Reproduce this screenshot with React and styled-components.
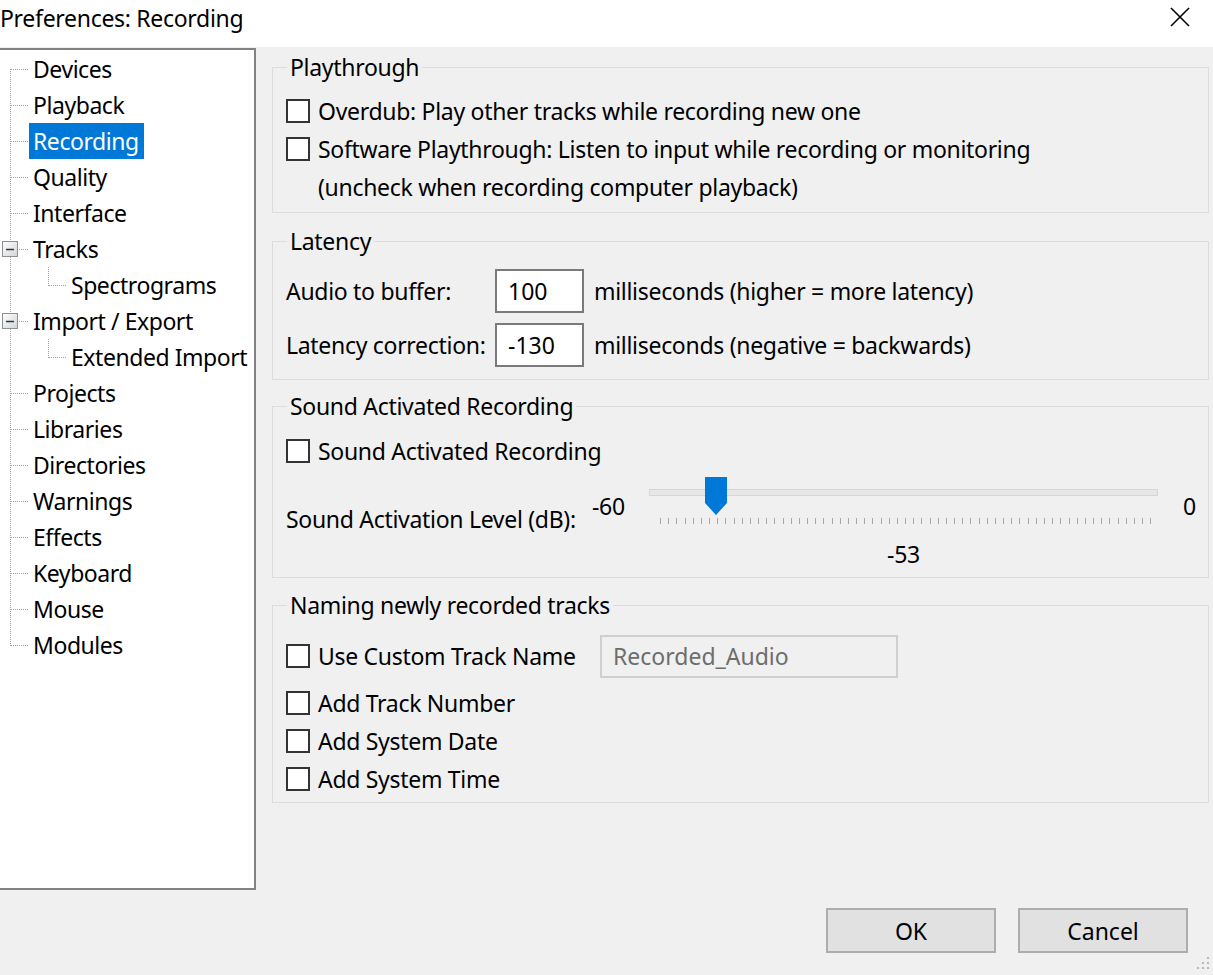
import React from "react";
import styled, { createGlobalStyle } from "styled-components";

const GlobalStyle = createGlobalStyle`
  html, body {
    margin: 0;
    padding: 0;
    background: #f0f0f0;
  }
  body {
    font-family: "Noto Sans", "Open Sans", sans-serif;
    color: #000;
  }
`;

const Window = styled.div`
  position: relative;
  width: 1213px;
  height: 975px;
  display: flex;
  flex-direction: column;
  background: #f0f0f0;
  overflow: hidden;
  font-size: 23px;
  letter-spacing: -0.3px;
`;

const TitleBar = styled.div`
  flex: none;
  height: 47px;
  background: #fff;
  display: flex;
  justify-content: space-between;
  align-items: flex-start;
`;

const Title = styled.div`
  margin: 3px 0 0 0;
  line-height: 30px;
`;

const CloseButton = styled.div`
  width: 46px;
  height: 34px;
  margin-right: 10px;
  display: flex;
  align-items: center;
  justify-content: center;
`;

const Body = styled.div`
  flex: none;
  height: 843px;
  display: flex;
`;

const Tree = styled.div`
  flex: none;
  box-sizing: border-box;
  width: 256px;
  height: 842px;
  margin-top: 1px;
  padding-top: 1px;
  background: #fff;
  border: 2px solid #828282;
  border-left: none;
  overflow: hidden;
  letter-spacing: -0.45px;
`;

const TreeRow = styled.div`
  height: 36px;
  display: flex;
  align-items: center;
`;

const TreeLabel = styled.span`
  height: 36px;
  line-height: 36px;
  padding: 0 5px 0 4px;
  white-space: nowrap;
  background: ${(p) => (p.$selected ? "#0078d7" : "transparent")};
  color: ${(p) => (p.$selected ? "#fff" : "#000")};
`;

const Panel = styled.div`
  flex: 1;
  min-width: 0;
  padding: 7px 4px 0 16px;
`;

const Group = styled.fieldset`
  margin: ${(p) => p.$mt || 0}px 0 0 0;
  padding: ${(p) => p.$pt}px 0 ${(p) => p.$pb}px 13px;
  border: 1px solid #dcdcdc;
  min-width: 0;
`;

const Legend = styled.legend`
  margin-left: 1px;
  padding: 0 3px;
  line-height: 26px;
`;

const CheckRow = styled.label`
  height: ${(p) => p.$h || 38}px;
  display: flex;
  align-items: center;
  white-space: nowrap;
`;

const CheckBox = styled.span`
  flex: none;
  box-sizing: border-box;
  width: 24px;
  height: 24px;
  margin-right: 8px;
  border: 2px solid #333;
  background: #fff;
`;

const CheckText = styled.span`
  display: inline-block;
  width: ${(p) => (p.$w ? `${p.$w}px` : "auto")};
`;

const NoteRow = styled.div`
  height: 38px;
  line-height: 38px;
  padding-left: 32px;
`;

const FieldRow = styled.div`
  height: 44px;
  display: flex;
  align-items: center;
  margin-top: ${(p) => p.$mt || 0}px;
  white-space: nowrap;
`;

const FieldLabel = styled.span`
  flex: none;
  width: 209px;
`;

const NumberInput = styled.input`
  box-sizing: border-box;
  width: 89px;
  height: 44px;
  margin: 0 10px 0 0;
  padding: 0 0 0 11px;
  border: 2px solid #7a7a7a;
  background: #fff;
  font: inherit;
  color: #000;
  outline: none;
`;

const NameInput = styled.input`
  box-sizing: border-box;
  width: 298px;
  height: 43px;
  margin: 0;
  padding: 0 0 0 11px;
  border: 2px solid #cfcfcf;
  background: #f0f0f0;
  font: inherit;
  color: #6d6d6d;
  outline: none;
`;

const SliderRow = styled.div`
  height: 100px;
  display: flex;
  align-items: flex-start;
  white-space: nowrap;
`;

const SliderLabel = styled.span`
  flex: none;
  width: 306px;
  margin-top: 34px;
  line-height: 30px;
`;

const SliderEnd = styled.span`
  flex: none;
  width: ${(p) => (p.$w ? `${p.$w}px` : "auto")};
  margin: 21px 0 0 ${(p) => p.$ml || 0}px;
  line-height: 30px;
`;

const Slider = styled.div`
  position: relative;
  flex: none;
  width: 509px;
  padding-top: 19px;
  display: flex;
  flex-direction: column;
`;

const Track = styled.div`
  box-sizing: border-box;
  height: 7px;
  background: #e7e7e7;
  border: 1px solid #d6d6d6;
`;

const Ticks = styled.svg`
  display: block;
  margin-top: 22px;
`;

const SliderValue = styled.div`
  margin-top: 15px;
  line-height: 30px;
  text-align: center;
`;

const Thumb = styled.svg`
  position: absolute;
  top: 7px;
  left: ${(p) => p.$left}px;
`;

const Footer = styled.div`
  display: flex;
  justify-content: flex-end;
  gap: 22px;
  padding: 18px 25px 0 0;
`;

const Button = styled.button`
  box-sizing: border-box;
  width: 170px;
  height: 45px;
  border: 2px solid #adadad;
  background: #e1e1e1;
  font: inherit;
  color: #000;
  padding: 0;
`;

const Grip = styled.svg`
  position: absolute;
  right: 2px;
  bottom: 2px;
`;

const treeItems = [
  { label: "Devices", depth: 0, first: true },
  { label: "Playback", depth: 0 },
  { label: "Recording", depth: 0, selected: true },
  { label: "Quality", depth: 0 },
  { label: "Interface", depth: 0 },
  { label: "Tracks", depth: 0, expander: true },
  { label: "Spectrograms", depth: 1 },
  { label: "Import / Export", depth: 0, expander: true },
  { label: "Extended Import", depth: 1 },
  { label: "Projects", depth: 0 },
  { label: "Libraries", depth: 0 },
  { label: "Directories", depth: 0 },
  { label: "Warnings", depth: 0 },
  { label: "Effects", depth: 0 },
  { label: "Keyboard", depth: 0 },
  { label: "Mouse", depth: 0 },
  { label: "Modules", depth: 0, last: true },
];

function TreeLines({ item }) {
  const w = item.depth ? 67 : 29;
  const dot = { stroke: "#a0a0a0", strokeWidth: 1, strokeDasharray: "1 1" };
  return (
    <svg width={w} height="36" style={{ flex: "none" }}>
      <line x1="10.5" y1={item.first ? 18 : 0} x2="10.5" y2={item.last ? 19 : 36} {...dot} />
      {item.depth === 0 && <line x1="11" y1="18.5" x2="29" y2="18.5" {...dot} />}
      {item.depth === 1 && (
        <>
          <line x1="48.5" y1="0" x2="48.5" y2="19" {...dot} />
          <line x1="49" y1="18.5" x2="67" y2="18.5" {...dot} />
        </>
      )}
      {item.expander && (
        <>
          <defs>
            <linearGradient id="exp" x1="0" y1="0" x2="1" y2="1">
              <stop offset="0" stopColor="#ffffff" />
              <stop offset="1" stopColor="#d4d4d4" />
            </linearGradient>
          </defs>
          <rect x="2.5" y="10.5" width="15" height="15" fill="url(#exp)" stroke="#8f8f8f" />
          <line x1="6" y1="18.5" x2="14" y2="18.5" stroke="#1e395b" strokeWidth="1.5" />
        </>
      )}
    </svg>
  );
}

function Check({ children, width }) {
  return (
    <CheckRow>
      <CheckBox />
      <CheckText $w={width}>{children}</CheckText>
    </CheckRow>
  );
}

export default function App() {
  const ticks = Array.from({ length: 61 }, (_, i) => 11.5 + Math.round(i * 8.17));
  return (
    <Window>
      <GlobalStyle />
      <TitleBar>
        <Title>Preferences: Recording</Title>
        <CloseButton>
          <svg width="20" height="20" viewBox="0 0 20 20">
            <path d="M1 1 L19 19 M19 1 L1 19" stroke="#000" strokeWidth="1.6" fill="none" />
          </svg>
        </CloseButton>
      </TitleBar>

      <Body>
        <Tree>
          {treeItems.map((item) => (
            <TreeRow key={item.label}>
              <TreeLines item={item} />
              <TreeLabel $selected={item.selected}>{item.label}</TreeLabel>
            </TreeRow>
          ))}
        </Tree>

        <Panel>
          <Group $pt={12} $pb={6}>
            <Legend>Playthrough</Legend>
            <Check>Overdub: Play other tracks while recording new one</Check>
            <Check>Software Playthrough: Listen to input while recording or monitoring</Check>
            <NoteRow>(uncheck when recording computer playback)</NoteRow>
          </Group>

          <Group $mt={15} $pt={15} $pb={12}>
            <Legend>Latency</Legend>
            <FieldRow>
              <FieldLabel>Audio to buffer:</FieldLabel>
              <NumberInput readOnly value="100" />
              <span>milliseconds (higher = more latency)</span>
            </FieldRow>
            <FieldRow $mt={10}>
              <FieldLabel>Latency correction:</FieldLabel>
              <NumberInput readOnly value="-130" />
              <span>milliseconds (negative = backwards)</span>
            </FieldRow>
          </Group>

          <Group $mt={13} $pt={13} $pb={7}>
            <Legend>Sound Activated Recording</Legend>
            <Check>Sound Activated Recording</Check>
            <SliderRow>
              <SliderLabel>Sound Activation Level (dB):</SliderLabel>
              <SliderEnd $w={57}>-60</SliderEnd>
              <Slider>
                <Track />
                <Ticks width="509" height="6">
                  {ticks.map((x) => (
                    <line key={x} x1={x} y1="0" x2={x} y2="6" stroke="#a8a8a8" strokeWidth="1" />
                  ))}
                </Ticks>
                <SliderValue>-53</SliderValue>
                <Thumb $left={56} width="22" height="38" viewBox="0 0 22 38">
                  <path d="M0 0 H22 V26 L11 38 L0 26 Z" fill="#0078d7" />
                </Thumb>
              </Slider>
              <SliderEnd $ml={25}>0</SliderEnd>
            </SliderRow>
          </Group>

          <Group $mt={14} $pt={16} $pb={4}>
            <Legend>Naming newly recorded tracks</Legend>
            <FieldRow>
              <CheckRow $h={44}>
                <CheckBox />
                <CheckText $w={282}>Use Custom Track Name</CheckText>
              </CheckRow>
              <NameInput readOnly value="Recorded_Audio" />
            </FieldRow>
            <div style={{ height: 6 }} />
            <Check>Add Track Number</Check>
            <Check>Add System Date</Check>
            <Check>Add System Time</Check>
          </Group>
        </Panel>
      </Body>

      <Footer>
        <Button>OK</Button>
        <Button>Cancel</Button>
      </Footer>

      <Grip width="18" height="18" viewBox="0 0 18 18">
        {[
          [14, 2],
          [9, 7],
          [14, 7],
          [4, 12],
          [9, 12],
          [14, 12],
        ].map(([x, y]) => (
          <rect key={`${x}-${y}`} x={x} y={y} width="2" height="2" fill="#b8b8b8" />
        ))}
      </Grip>
    </Window>
  );
}
